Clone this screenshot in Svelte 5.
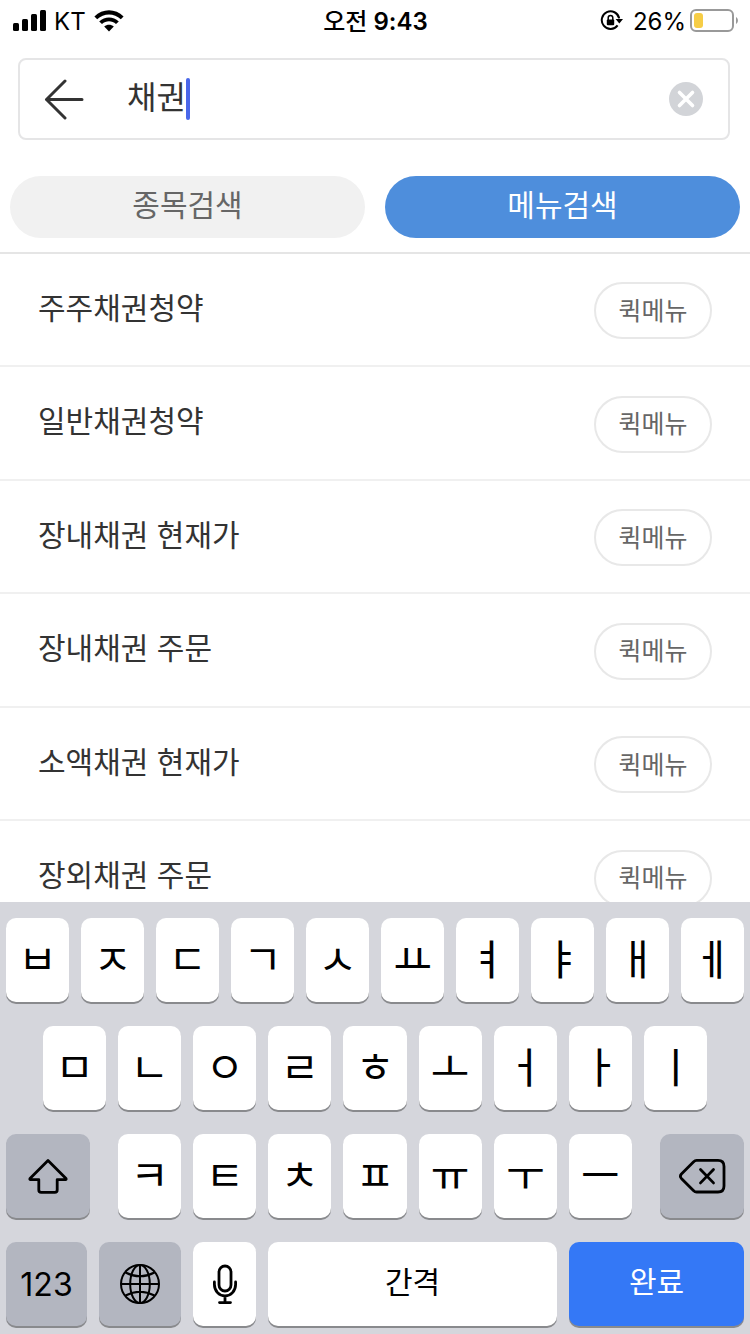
<script lang="ts">
    let query = $state("채권");
    let activeTab = $state(1);

    const tabs = ["종목검색", "메뉴검색"];

    const menus = [
        "주주채권청약",
        "일반채권청약",
        "장내채권 현재가",
        "장내채권 주문",
        "소액채권 현재가",
        "장외채권 주문",
    ];

    const topKeys = ["ㅂ", "ㅈ", "ㄷ", "ㄱ", "ㅅ", "ㅛ", "ㅕ", "ㅑ", "ㅐ", "ㅔ"];
    const middleKeys = ["ㅁ", "ㄴ", "ㅇ", "ㄹ", "ㅎ", "ㅗ", "ㅓ", "ㅏ", "ㅣ"];
    const bottomKeys = ["ㅋ", "ㅌ", "ㅊ", "ㅍ", "ㅠ", "ㅜ", "ㅡ"];

    function clearQuery() {
        query = "";
    }

    function typeKey(key: string) {
        query += key;
    }

    function removeLast() {
        query = query.slice(0, -1);
    }
</script>

{#snippet letter(key: string)}
    <button class="key letter" onclick={() => typeKey(key)}>{key}</button>
{/snippet}

<div class="screen">
    <div class="status">
        <div class="status_left">
            <svg width="34" height="22" viewBox="0 0 34 22">
                <rect x="1" y="13" width="6" height="8" rx="1.5" />
                <rect x="10" y="9" width="6" height="12" rx="1.5" />
                <rect x="19" y="4" width="6" height="17" rx="1.5" />
                <rect x="28" y="0" width="6" height="21" rx="1.5" />
            </svg>
            <span>KT</span>
            <svg width="30" height="22" viewBox="0 0 30 22">
                <path d="M0.4 6.6 C8.5 -1.8 21.5 -1.8 29.6 6.6 L26.8 9.3 C20.2 2.8 9.8 2.8 3.2 9.3 Z" />
                <path d="M5.2 11.4 C10.8 6.1 19.2 6.1 24.8 11.4 L22 14.1 C18 10.4 12 10.4 8 14.1 Z" />
                <path d="M10.2 16.6 C13 14.2 17 14.2 19.8 16.6 L15 21.4 Z" />
            </svg>
        </div>
        <div class="time"><span>오전</span> 9:43</div>
        <div class="status_right">
            <svg width="23" height="22" viewBox="0 0 23 22">
                <path d="M17.6 15.4 A8.8 8.8 0 1 1 19.2 8.4" fill="none" stroke="#000" stroke-width="2" />
                <path d="M15.6 9 H23 L19.3 13.6 Z" />
                <rect x="6.8" y="9.4" width="7.4" height="5.8" rx="1" />
                <path d="M8.2 10 V7.8 A2.3 2.3 0 0 1 12.8 7.8 V10" fill="none" stroke="#000" stroke-width="1.5" />
            </svg>
            <span class="percent">26%</span>
            <svg width="49" height="24" viewBox="0 0 49 24">
                <rect x="1" y="1" width="42" height="21" rx="5" fill="none" stroke="#999" stroke-width="2" />
                <rect x="4" y="4" width="9" height="15" rx="3" fill="#f6cd46" />
                <path d="M46 8 C48.6 9.4 48.6 13.6 46 15 Z" fill="#999" />
            </svg>
        </div>
    </div>

    <div class="search">
        <button class="icon_button" aria-label="뒤로">
            <svg width="42" height="42" viewBox="0 0 42 42" fill="none" stroke="#333" stroke-width="3" stroke-linecap="round" stroke-linejoin="round">
                <path d="M22 3 L3.5 21.5 L22 40 M3.5 21.5 H39" />
            </svg>
        </button>
        <div class="field">
            <input type="text" aria-label="검색어" bind:value={query} />
            <span class="caret"></span>
        </div>
        <button class="icon_button" aria-label="지우기" onclick={clearQuery}>
            <svg width="34" height="34" viewBox="0 0 34 34">
                <circle cx="17" cy="17" r="17" fill="#d2d4d8" />
                <path d="M10.5 10.5 L23.5 23.5 M23.5 10.5 L10.5 23.5" stroke="#fff" stroke-width="3.6" stroke-linecap="round" />
            </svg>
        </button>
    </div>

    <div class="tabs">
        {#each tabs as tab, i}
            <button class="tab {activeTab == i ? "selected_tab" : ""}" onclick={() => (activeTab = i)}>{tab}</button>
        {/each}
    </div>

    <ul class="menus">
        {#each menus as menu}
            <li>
                <span>{menu}</span>
                <button class="quick">퀵메뉴</button>
            </li>
        {/each}
    </ul>

    <div class="keyboard">
        <div class="key_row">
            {#each topKeys as key}
                {@render letter(key)}
            {/each}
        </div>
        <div class="key_row inset">
            {#each middleKeys as key}
                {@render letter(key)}
            {/each}
        </div>
        <div class="key_row wide_gap">
            <button class="key dark shift" aria-label="시프트">
                <svg width="40" height="36" viewBox="0 0 40 36" fill="none" stroke="#000" stroke-width="2.8" stroke-linejoin="round">
                    <path d="M20 2.5 L38 20.5 Q38.6 21.6 37.4 21.6 H29.2 V32 Q29.2 34.4 26.8 34.4 H13.2 Q10.8 34.4 10.8 32 V21.6 H2.6 Q1.4 21.6 2 20.5 Z" />
                </svg>
            </button>
            <div class="letters">
                {#each bottomKeys as key}
                    {@render letter(key)}
                {/each}
            </div>
            <button class="key dark shift" aria-label="삭제" onclick={removeLast}>
                <svg width="48" height="36" viewBox="0 0 48 36" fill="none" stroke="#000" stroke-width="2.8" stroke-linecap="round" stroke-linejoin="round">
                    <path d="M18.6 2.4 H40 Q46 2.4 46 8.4 V28 Q46 34 40 34 H18.6 Q17 34 15.4 32.4 L3.4 20.4 Q1.4 18.2 3.4 16 L15.4 4 Q17 2.4 18.6 2.4 Z" />
                    <path d="M22.5 11.5 L35.5 24.9 M35.5 11.5 L22.5 24.9" />
                </svg>
            </button>
        </div>
        <div class="key_row">
            <button class="key dark numbers">123</button>
            <button class="key dark globe" aria-label="언어 변경">
                <svg width="42" height="42" viewBox="0 0 42 42" fill="none" stroke="#000" stroke-width="2">
                    <circle cx="21" cy="21" r="19" />
                    <ellipse cx="21" cy="21" rx="9.8" ry="19" />
                    <path d="M21 2 V40 M2 21 H40 M6.5 9.5 Q21 17 35.5 9.5 M6.5 32.5 Q21 25 35.5 32.5" />
                </svg>
            </button>
            <button class="key mic" aria-label="음성 입력">
                <svg width="26" height="42" viewBox="0 0 26 42" fill="none" stroke="#000" stroke-width="2.8" stroke-linecap="round">
                    <rect x="7" y="3" width="12" height="25" rx="6" />
                    <path d="M2.4 19 V21.5 A10.6 11.5 0 0 0 23.6 21.5 V19 M13 33 V39 M7.5 39.6 H18.5" />
                </svg>
            </button>
            <button class="key word space" onclick={() => typeKey(" ")}>간격</button>
            <button class="key word done">완료</button>
        </div>
    </div>
</div>

<style>
    :global(body) {
        margin: 0;
        background-color: #fff;
    }

    .screen {
        display: flex;
        flex-direction: column;
        height: 100vh;
        font-family: Inter, "Noto Sans CJK KR", sans-serif;
        color: #333;
    }

    button {
        padding: 0;
        border: 0;
        background: none;
        font-family: inherit;
        color: inherit;
        cursor: pointer;
    }

    svg {
        display: block;
        flex: none;
    }

    .status {
        display: grid;
        grid-template-columns: 1fr auto 1fr;
        align-items: center;
        height: 40px;
        padding: 0 11px 0 12px;
        font-size: 24px;
        line-height: 40px;
        color: #000;
    }

    .status_left {
        display: flex;
        align-items: center;
        gap: 8px;
    }

    .status_right {
        display: flex;
        align-items: center;
        justify-content: flex-end;
    }

    .status_left span,
    .percent,
    .time {
        padding-top: 2px;
    }

    .percent {
        margin: 0 4px 0 10px;
    }

    .time {
        font-weight: 600;
    }

    .time span {
        font-weight: 500;
    }

    .search {
        display: flex;
        align-items: center;
        height: 78px;
        margin: 18px 20px 36px 18px;
        padding: 0 25px 0 23px;
        border: 2px solid #e5e5e6;
        border-radius: 8px;
    }

    .field {
        display: flex;
        flex: 1;
        align-items: center;
        min-width: 0;
        margin-left: 42px;
    }

    input {
        field-sizing: content;
        max-width: 100%;
        height: 48px;
        padding: 0 0 8px;
        border: 0;
        outline: 0;
        background: none;
        font-family: inherit;
        font-size: 32px;
        color: #333;
        caret-color: #4967ea;
    }

    .caret {
        width: 4px;
        height: 42px;
        border-radius: 2px;
        background-color: #4967ea;
    }

    .tabs {
        display: flex;
        gap: 20px;
        padding: 0 10px 14px;
        border-bottom: 2px solid #e5e5e5;
    }

    .tab {
        flex: 1;
        height: 62px;
        padding-bottom: 8px;
        border-radius: 31px;
        background-color: #f1f1f1;
        font-size: 30px;
        color: #666;
    }

    .selected_tab {
        background-color: #4e8edc;
        color: #fff;
    }

    .menus {
        flex: 1;
        min-height: 0;
        margin: 0;
        padding: 0;
        overflow: hidden;
        list-style: none;
        font-size: 30px;
    }

    li {
        display: flex;
        align-items: center;
        justify-content: space-between;
        box-sizing: border-box;
        height: 113px;
        padding: 2px 38px 0;
        border-bottom: 2px solid #f0f0f0;
    }

    li:nth-child(even) {
        height: 114px;
    }

    li span {
        padding-bottom: 10px;
    }

    .quick {
        width: 118px;
        height: 57px;
        padding-bottom: 4px;
        border: 2px solid #e8e8e8;
        border-radius: 29px;
        font-size: 25px;
        color: #666;
    }

    .keyboard {
        display: flex;
        flex-direction: column;
        gap: 24px;
        padding: 16px 6px 8px;
        background-color: #d5d6dc;
    }

    .key_row,
    .letters {
        display: flex;
        gap: 12px;
    }

    .inset {
        padding: 0 5%;
    }

    .wide_gap {
        gap: 28px;
    }

    .key {
        display: flex;
        align-items: center;
        justify-content: center;
        box-sizing: border-box;
        height: 84px;
        border-radius: 10px;
        background-color: #fff;
        box-shadow: 0 2px 0 #898a8d;
        color: #000;
    }

    .letter {
        flex: 1 1 0;
        min-width: 0;
        padding-bottom: 8px;
        font-size: 42px;
    }

    .word {
        padding-bottom: 8px;
        font-size: 30px;
    }

    .letters {
        flex: 513 1 0;
    }

    .dark {
        background-color: #b3b6c0;
    }

    .shift {
        flex: 84 1 0;
    }

    .numbers {
        flex: 81 1 0;
        font-size: 32px;
    }

    .globe {
        flex: 82 1 0;
    }

    .mic {
        flex: 63 1 0;
    }

    .space {
        flex: 289 1 0;
    }

    .done {
        flex: 175 1 0;
        background-color: #3478f6;
        color: #fff;
    }
</style>
